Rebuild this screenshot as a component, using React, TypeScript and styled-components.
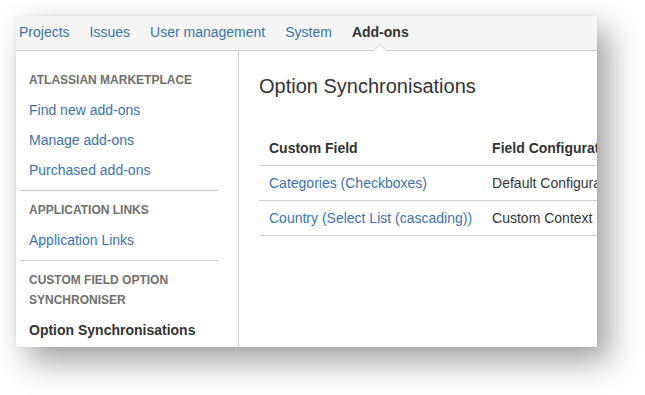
import React from 'react';
import styled, { createGlobalStyle } from 'styled-components';

const GlobalStyle = createGlobalStyle`
  body {
    margin: 0;
    background: #fff;
    font-family: 'Liberation Sans', Arial, sans-serif;
    color: #333;
  }
`;

const Page = styled.div`
  box-sizing: border-box;
  width: 645px;
  height: 395px;
  padding: 16px 0 0 16px;
  overflow: hidden;
`;

const Card = styled.div`
  width: 581px;
  height: 331px;
  background: #fff;
  overflow: hidden;
  display: flex;
  flex-direction: column;
  box-shadow: 12px 14px 30px rgba(0, 0, 0, 0.38), 0 0 4px rgba(0, 0, 0, 0.06);
`;

const TopNav = styled.nav`
  height: 34px;
  flex: none;
  background: #f5f5f5;
  border-bottom: 1px solid #ccc;
  display: flex;
  gap: 20px;
  padding: 0 3px;
  font-size: 14px;
`;

const NavItem = styled.a<{ $active?: boolean }>`
  position: relative;
  display: flex;
  align-items: center;
  padding-bottom: 3px;
  color: ${(p) => (p.$active ? '#333' : '#3b73af')};
  font-weight: ${(p) => (p.$active ? 'bold' : 'normal')};
  text-decoration: none;

  ${(p) =>
    p.$active &&
    `
    &::before, &::after {
      content: '';
      position: absolute;
      left: 50%;
      bottom: -1px;
      width: 0;
      height: 0;
    }
    &::before {
      margin-left: -7px;
      border-left: 7px solid transparent;
      border-right: 7px solid transparent;
      border-bottom: 7px solid #ccc;
    }
    &::after {
      margin-left: -6px;
      border-left: 6px solid transparent;
      border-right: 6px solid transparent;
      border-bottom: 6px solid #fff;
    }
  `}
`;

const Body = styled.div`
  flex: 1;
  display: flex;
  min-height: 0;
`;

const Sidebar = styled.aside`
  width: 223px;
  box-sizing: border-box;
  flex: none;
  border-right: 1px solid #ccc;
  padding: 14px 20px 0 3px;
`;

const Group = styled.div`
  & + & {
    margin-top: 5px;
    padding-top: 4px;
    border-top: 1px solid #ccc;
  }
`;

const GroupHeading = styled.div`
  font-size: 12px;
  font-weight: bold;
  text-transform: uppercase;
  color: #707070;
  line-height: 20px;
  padding: 5px 0 5px 10px;
`;

const SideLink = styled.a<{ $active?: boolean }>`
  display: block;
  font-size: 14px;
  line-height: 20px;
  padding: 5px 0 5px 10px;
  color: ${(p) => (p.$active ? '#333' : '#3b73af')};
  font-weight: ${(p) => (p.$active ? 'bold' : 'normal')};
  text-decoration: none;
`;

const Main = styled.main`
  flex: 1;
  min-width: 0;
  padding: 20px 0 0 20px;
`;

const Title = styled.h1`
  margin: 0 0 30px;
  font-size: 20px;
  line-height: 30px;
  font-weight: normal;
  color: #333;
`;

const Table = styled.table`
  border-collapse: collapse;
  font-size: 14px;
`;

const Th = styled.th`
  text-align: left;
  font-weight: bold;
  color: #333;
  line-height: 20px;
  padding: 7px 10px;
  white-space: nowrap;
  border-bottom: 1px solid #ccc;
`;

const Td = styled.td`
  line-height: 20px;
  padding: 7px 10px;
  white-space: nowrap;
  color: #333;
  border-bottom: 1px solid #ccc;
`;

const CellLink = styled.a`
  color: #3b73af;
  text-decoration: none;
`;

const navItems = ['Projects', 'Issues', 'User management', 'System', 'Add-ons'];

const groups = [
  {
    heading: ['Atlassian Marketplace'],
    links: ['Find new add-ons', 'Manage add-ons', 'Purchased add-ons'],
  },
  { heading: ['Application Links'], links: ['Application Links'] },
  {
    heading: ['Custom Field Option', 'Synchroniser'],
    links: ['Option Synchronisations'],
    active: 'Option Synchronisations',
  },
];

const rows = [
  { field: 'Categories (Checkboxes)', config: 'Default Configuration Scheme for Categories' },
  { field: 'Country (Select List (cascading))', config: 'Custom Context' },
];

export default function App() {
  return (
    <Page>
      <GlobalStyle />
      <Card>
        <TopNav>
          {navItems.map((item) => (
            <NavItem key={item} $active={item === 'Add-ons'}>
              {item}
            </NavItem>
          ))}
        </TopNav>
        <Body>
          <Sidebar>
            {groups.map((g) => (
              <Group key={g.heading.join(' ')}>
                <GroupHeading>
                  {g.heading.map((line, i) => (
                    <div key={i}>{line}</div>
                  ))}
                </GroupHeading>
                {g.links.map((l) => (
                  <SideLink key={l} $active={l === g.active}>
                    {l}
                  </SideLink>
                ))}
              </Group>
            ))}
          </Sidebar>
          <Main>
            <Title>Option Synchronisations</Title>
            <Table>
              <thead>
                <tr>
                  <Th>Custom Field</Th>
                  <Th>Field Configuration Scheme</Th>
                </tr>
              </thead>
              <tbody>
                {rows.map((r) => (
                  <tr key={r.field}>
                    <Td>
                      <CellLink>{r.field}</CellLink>
                    </Td>
                    <Td>{r.config}</Td>
                  </tr>
                ))}
              </tbody>
            </Table>
          </Main>
        </Body>
      </Card>
    </Page>
  );
}
